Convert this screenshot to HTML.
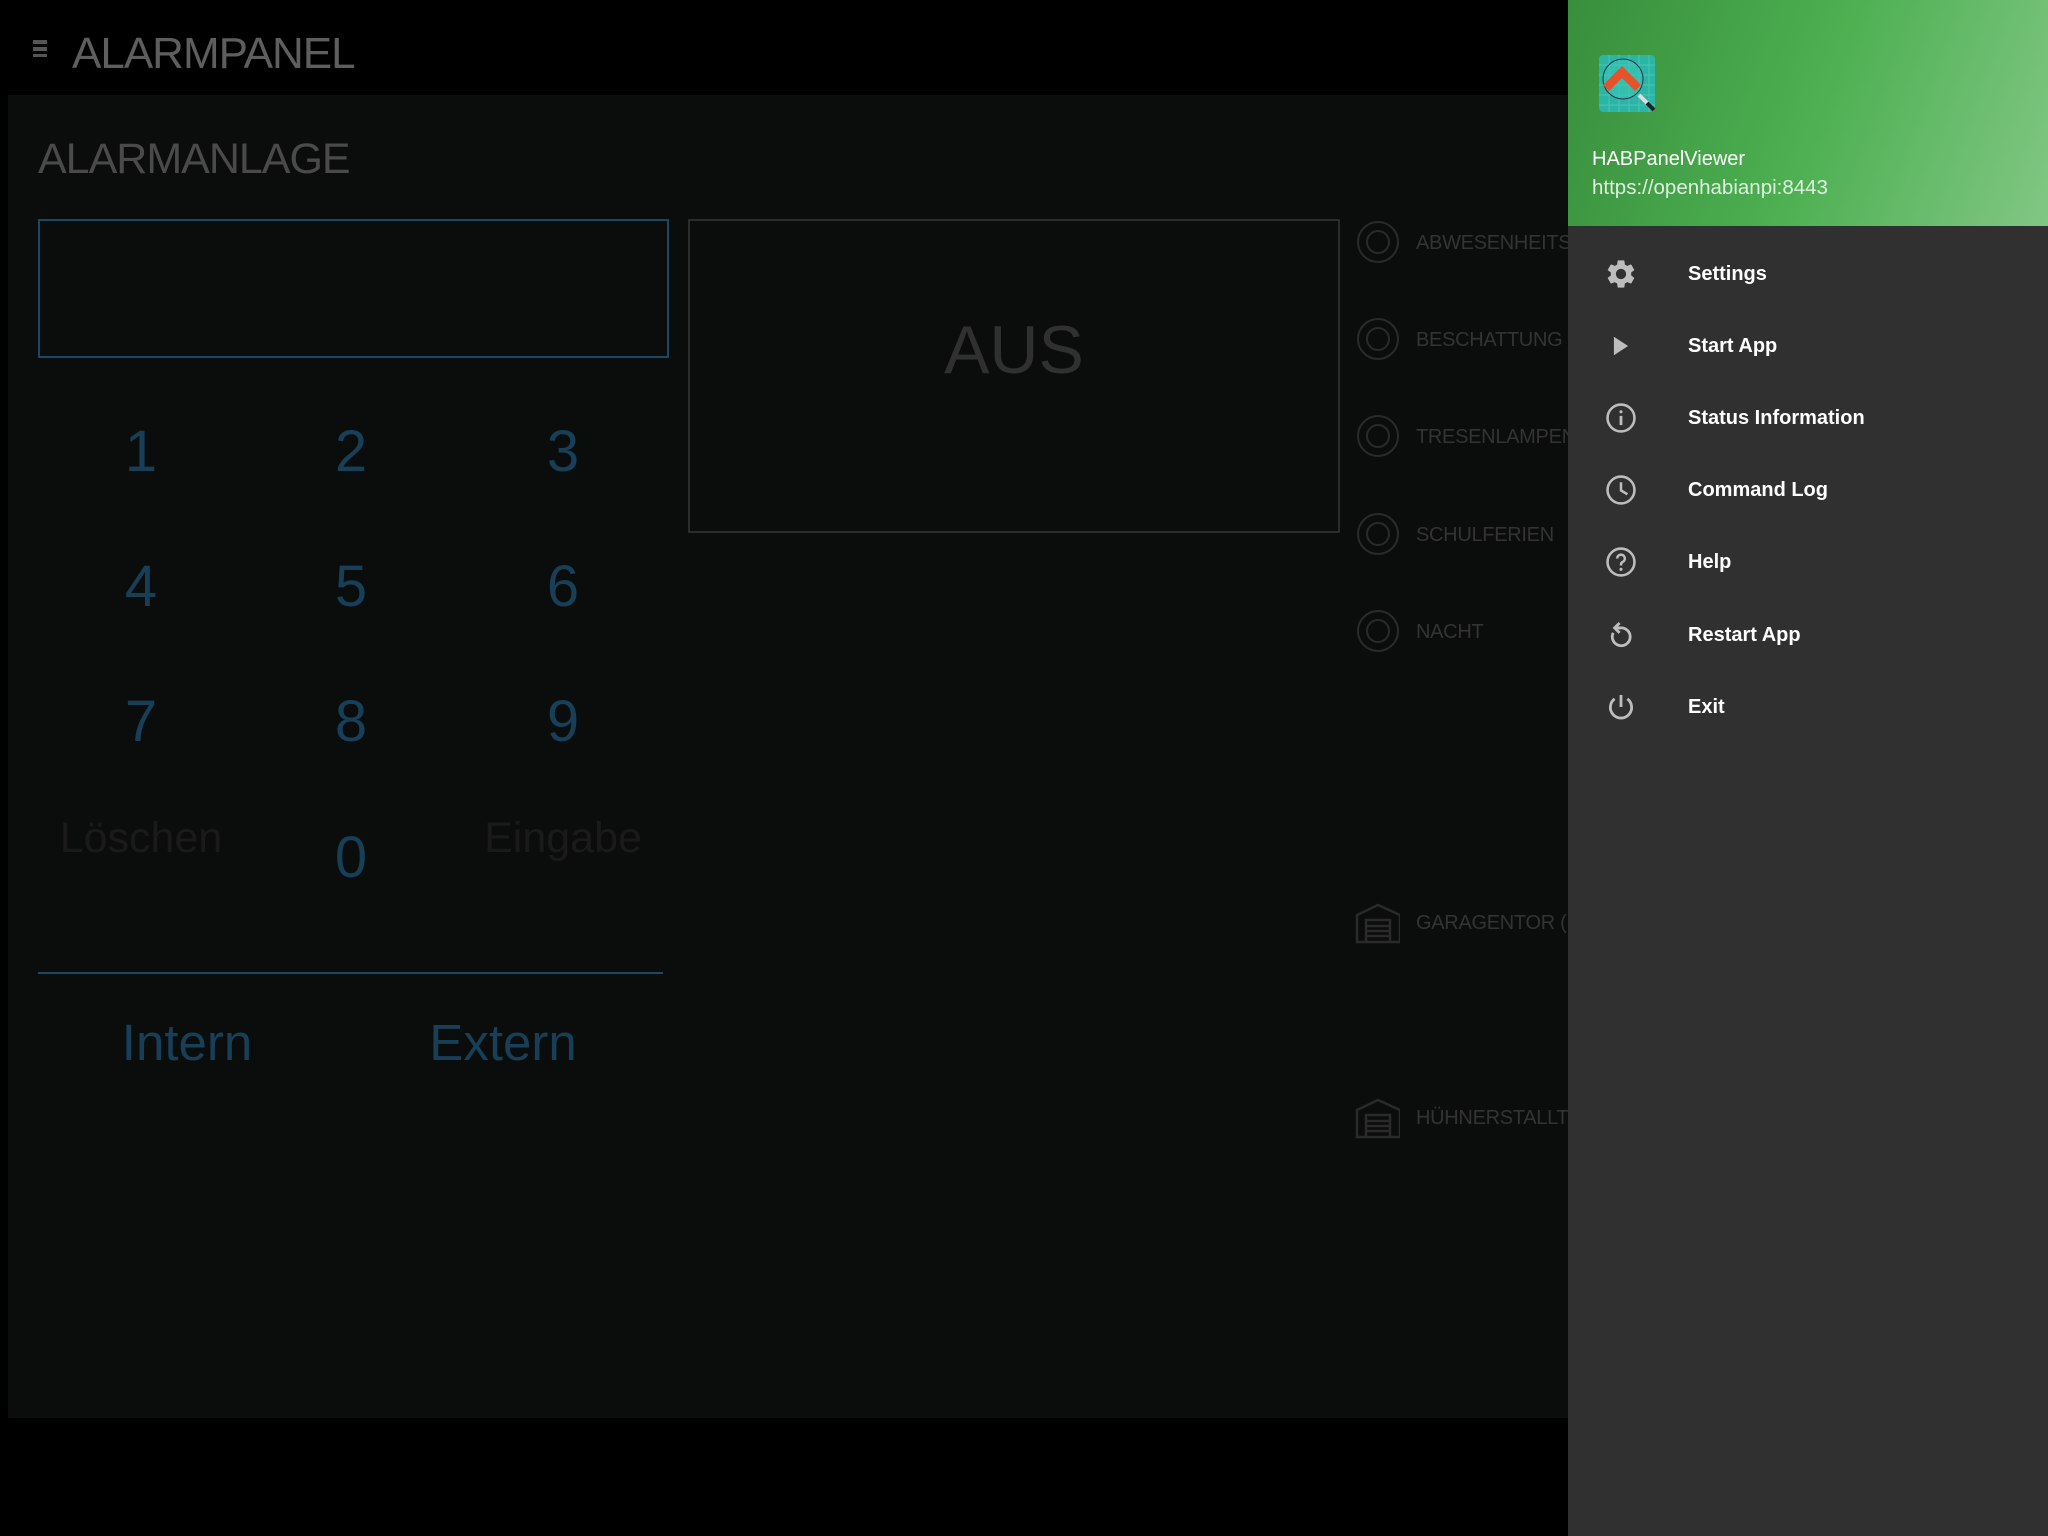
<!DOCTYPE html>
<html><head><meta charset="utf-8">
<style>
*{margin:0;padding:0;box-sizing:border-box}
html,body{width:2048px;height:1536px;background:#000;overflow:hidden;font-family:"Liberation Sans",sans-serif}
.a{position:absolute}
.panel{left:8px;top:95px;width:1560px;height:1323px;background:#0b0d0d}
.t{position:absolute;white-space:nowrap;line-height:1}
.dig{position:absolute;width:160px;text-align:center;font-size:58px;color:#173f58;line-height:1;font-weight:normal}
.lbl{position:absolute;font-size:20px;color:#333;left:1416px;white-space:nowrap;line-height:1;letter-spacing:-0.3px}
.drawer{left:1568px;top:0;width:480px;height:1536px;background:#303030}
.hdr{left:0;top:0;width:480px;height:226px;background:linear-gradient(110deg,#388e3c 0%,#4caf50 50%,#81c784 100%)}
.mi{position:absolute;left:120px;font-size:20px;font-weight:bold;color:#fff;line-height:1}
.ic{position:absolute;left:36px;width:34px;height:34px}
</style></head><body>
<div class="a" style="left:33px;top:40px;width:14px;height:4px;background:#555"></div>
<div class="a" style="left:33px;top:47px;width:14px;height:4px;background:#555"></div>
<div class="a" style="left:33px;top:54px;width:14px;height:3px;background:#555"></div>
<div class="t" style="left:72px;top:32px;font-size:44px;color:#5e5e5e;letter-spacing:-1px">ALARMPANEL</div>

<div class="a panel"></div>
<div class="t" style="left:38px;top:138px;font-size:43px;color:#4a4a4a;letter-spacing:-1px">ALARMANLAGE</div>
<div class="a" style="left:38px;top:219px;width:631px;height:139px;border:2px solid #1a4966"></div>
<div class="a" style="left:688px;top:219px;width:652px;height:314px;border:2px solid #2c2c2c"></div>
<div class="t" style="left:688px;top:316px;width:652px;text-align:center;font-size:68px;color:#303030">AUS</div>

<div class="dig" style="left:61px;top:423px">1</div>
<div class="dig" style="left:271px;top:423px">2</div>
<div class="dig" style="left:483px;top:423px">3</div>
<div class="dig" style="left:61px;top:558px">4</div>
<div class="dig" style="left:271px;top:558px">5</div>
<div class="dig" style="left:483px;top:558px">6</div>
<div class="dig" style="left:61px;top:693px">7</div>
<div class="dig" style="left:271px;top:693px">8</div>
<div class="dig" style="left:483px;top:693px">9</div>
<div class="dig" style="left:271px;top:829px">0</div>
<div class="t" style="left:41px;top:817px;width:200px;text-align:center;font-size:43px;color:#1a1a1a">Löschen</div>
<div class="t" style="left:463px;top:817px;width:200px;text-align:center;font-size:43px;color:#1a1a1a">Eingabe</div>
<div class="a" style="left:38px;top:972px;width:625px;height:2px;background:#1a4966"></div>
<div class="t" style="left:87px;top:1017px;width:200px;text-align:center;font-size:51px;color:#173f58">Intern</div>
<div class="t" style="left:403px;top:1017px;width:200px;text-align:center;font-size:51px;color:#173f58">Extern</div>

<svg class="a" style="left:1340px;top:200px" width="60" height="1000" viewBox="0 0 60 1000" fill="none" stroke="#2a2a2a" stroke-width="2">
<g><circle cx="38" cy="42" r="20"/><circle cx="38" cy="42" r="11"/></g>
<g><circle cx="38" cy="139" r="20"/><circle cx="38" cy="139" r="11"/></g>
<g><circle cx="38" cy="236" r="20"/><circle cx="38" cy="236" r="11"/></g>
<g><circle cx="38" cy="334" r="20"/><circle cx="38" cy="334" r="11"/></g>
<g><circle cx="38" cy="431" r="20"/><circle cx="38" cy="431" r="11"/></g>
<g stroke-width="2.5"><path d="M17 742 V715 L38 705 L60 715 V742 Z"/><path d="M26 742 V720 H50 V742 M26 726 H50 M26 731 H50 M26 736 H50"/></g>
<g stroke-width="2.5"><path d="M17 937 V910 L38 900 L60 910 V937 Z"/><path d="M26 937 V915 H50 V937 M26 921 H50 M26 926 H50 M26 931 H50"/></g>
</svg>
<div class="lbl" style="top:233px">ABWESENHEITS</div>
<div class="lbl" style="top:330px">BESCHATTUNG</div>
<div class="lbl" style="top:427px">TRESENLAMPEN</div>
<div class="lbl" style="top:525px">SCHULFERIEN</div>
<div class="lbl" style="top:622px">NACHT</div>
<div class="lbl" style="top:913px">GARAGENTOR (1</div>
<div class="lbl" style="top:1108px">HÜHNERSTALLT</div>

<div class="a drawer">
 <div class="a hdr"></div>
 <svg class="a" style="left:31px;top:55px" width="58" height="58" viewBox="0 0 58 58">
  <rect x="0" y="0" width="56" height="57" rx="4" fill="#2ab5a5"/>
  <g stroke="#5fd0c3" stroke-width="1" opacity=".6"><path d="M0 10H56M0 20H56M0 30H56M0 40H56M0 50H56M10 0V57M20 0V57M30 0V57M40 0V57M50 0V57"/></g>
  <circle cx="24" cy="24" r="20" fill="#3cc7b8" fill-opacity=".5" stroke="#235" stroke-width="1"/>
  <path d="M4 30 L23 11 L42 30 L36 36 L23 23 L10 36 Z" fill="#e8522a"/>
  <path d="M40 40 L53 53" stroke="#ddd" stroke-width="4"/><path d="M48 48 L55 55" stroke="#222" stroke-width="4"/>
 </svg>
 <div class="t" style="left:24px;top:149px;font-size:20px;color:#fff">HABPanelViewer</div>
 <div class="t" style="left:24px;top:178px;font-size:20.5px;color:#e0f0e0">https://openhabianpi:8443</div>

 <svg class="ic" style="top:257px" viewBox="0 0 24 24"><path fill="#bdbdbd" d="M19.14 12.94c.04-.3.06-.61.06-.94 0-.32-.02-.64-.07-.94l2.03-1.58a.49.49 0 0 0 .12-.61l-1.920-3.32a.488.488 0 0 0-.59-.22l-2.39.96c-.5-.38-1.03-.7-1.62-.94l-.36-2.54a.484.484 0 0 0-.48-.41h-3.84c-.24 0-.43.17-.47.41l-.36 2.54c-.59.24-1.130.57-1.62.94l-2.39-.96c-.22-.08-.47 0-.59.22L2.74 8.87c-.12.21-.08.47.12.61l2.03 1.58c-.05.3-.09.63-.09.94s.02.64.07.94l-2.03 1.58a.49.49 0 0 0-.12.61l1.92 3.32c.12.22.37.29.59.22l2.39-.96c.5.38 1.03.7 1.62.94l.36 2.54c.05.24.24.41.48.41h3.84c.24 0 .44-.17.47-.41l.36-2.54c.59-.24 1.13-.56 1.62-.94l2.39.96c.22.08.47 0 .59-.22l1.92-3.32c.12-.22.07-.47-.12-.61l-2.01-1.58zM12 15.6c-1.98 0-3.6-1.62-3.6-3.6s1.62-3.6 3.6-3.6 3.6 1.62 3.6 3.6-1.62 3.6-3.6 3.6z"/></svg>
 <div class="mi" style="top:264px">Settings</div>

 <svg class="ic" style="top:329px" viewBox="0 0 24 24"><path fill="#bdbdbd" d="M7 5.5v13l10-6.5z"/></svg>
 <div class="mi" style="top:336px">Start App</div>

 <svg class="ic" style="top:401px" viewBox="0 0 24 24" fill="none" stroke="#bdbdbd" stroke-width="1.8"><circle cx="12" cy="12" r="9.5"/><path d="M12 10.5V17" stroke-width="2"/><circle cx="12" cy="7.6" r="1.1" fill="#bdbdbd" stroke="none"/></svg>
 <div class="mi" style="top:408px">Status Information</div>

 <svg class="ic" style="top:473px" viewBox="0 0 24 24" fill="none" stroke="#bdbdbd" stroke-width="1.8"><circle cx="12" cy="12" r="9.5"/><path d="M12 6.5V12.3L16.5 15"/></svg>
 <div class="mi" style="top:480px">Command Log</div>

 <svg class="ic" style="top:545px" viewBox="0 0 24 24" fill="none" stroke="#bdbdbd" stroke-width="1.8"><circle cx="12" cy="12" r="9.5"/><path d="M9.3 9.5a2.7 2.7 0 1 1 3.8 2.5c-.8.4-1.1 1-1.1 2v.5"/><circle cx="12" cy="17.2" r="1.1" fill="#bdbdbd" stroke="none"/></svg>
 <div class="mi" style="top:552px">Help</div>

 <svg class="ic" style="top:618px" viewBox="0 0 24 24" fill="none" stroke="#bdbdbd" stroke-width="2"><path d="M6.5 10.5A6.3 6.3 0 1 0 11.5 7H9"/><path d="M11 3.5L7.5 7 11 10.5"/></svg>
 <div class="mi" style="top:625px">Restart App</div>

 <svg class="ic" style="top:690px" viewBox="0 0 24 24" fill="none" stroke="#bdbdbd" stroke-width="2"><path d="M12 3.5V12"/><path d="M7.5 6.3A7.5 7.5 0 1 0 16.5 6.3"/></svg>
 <div class="mi" style="top:697px">Exit</div>
</div>
</body></html>
